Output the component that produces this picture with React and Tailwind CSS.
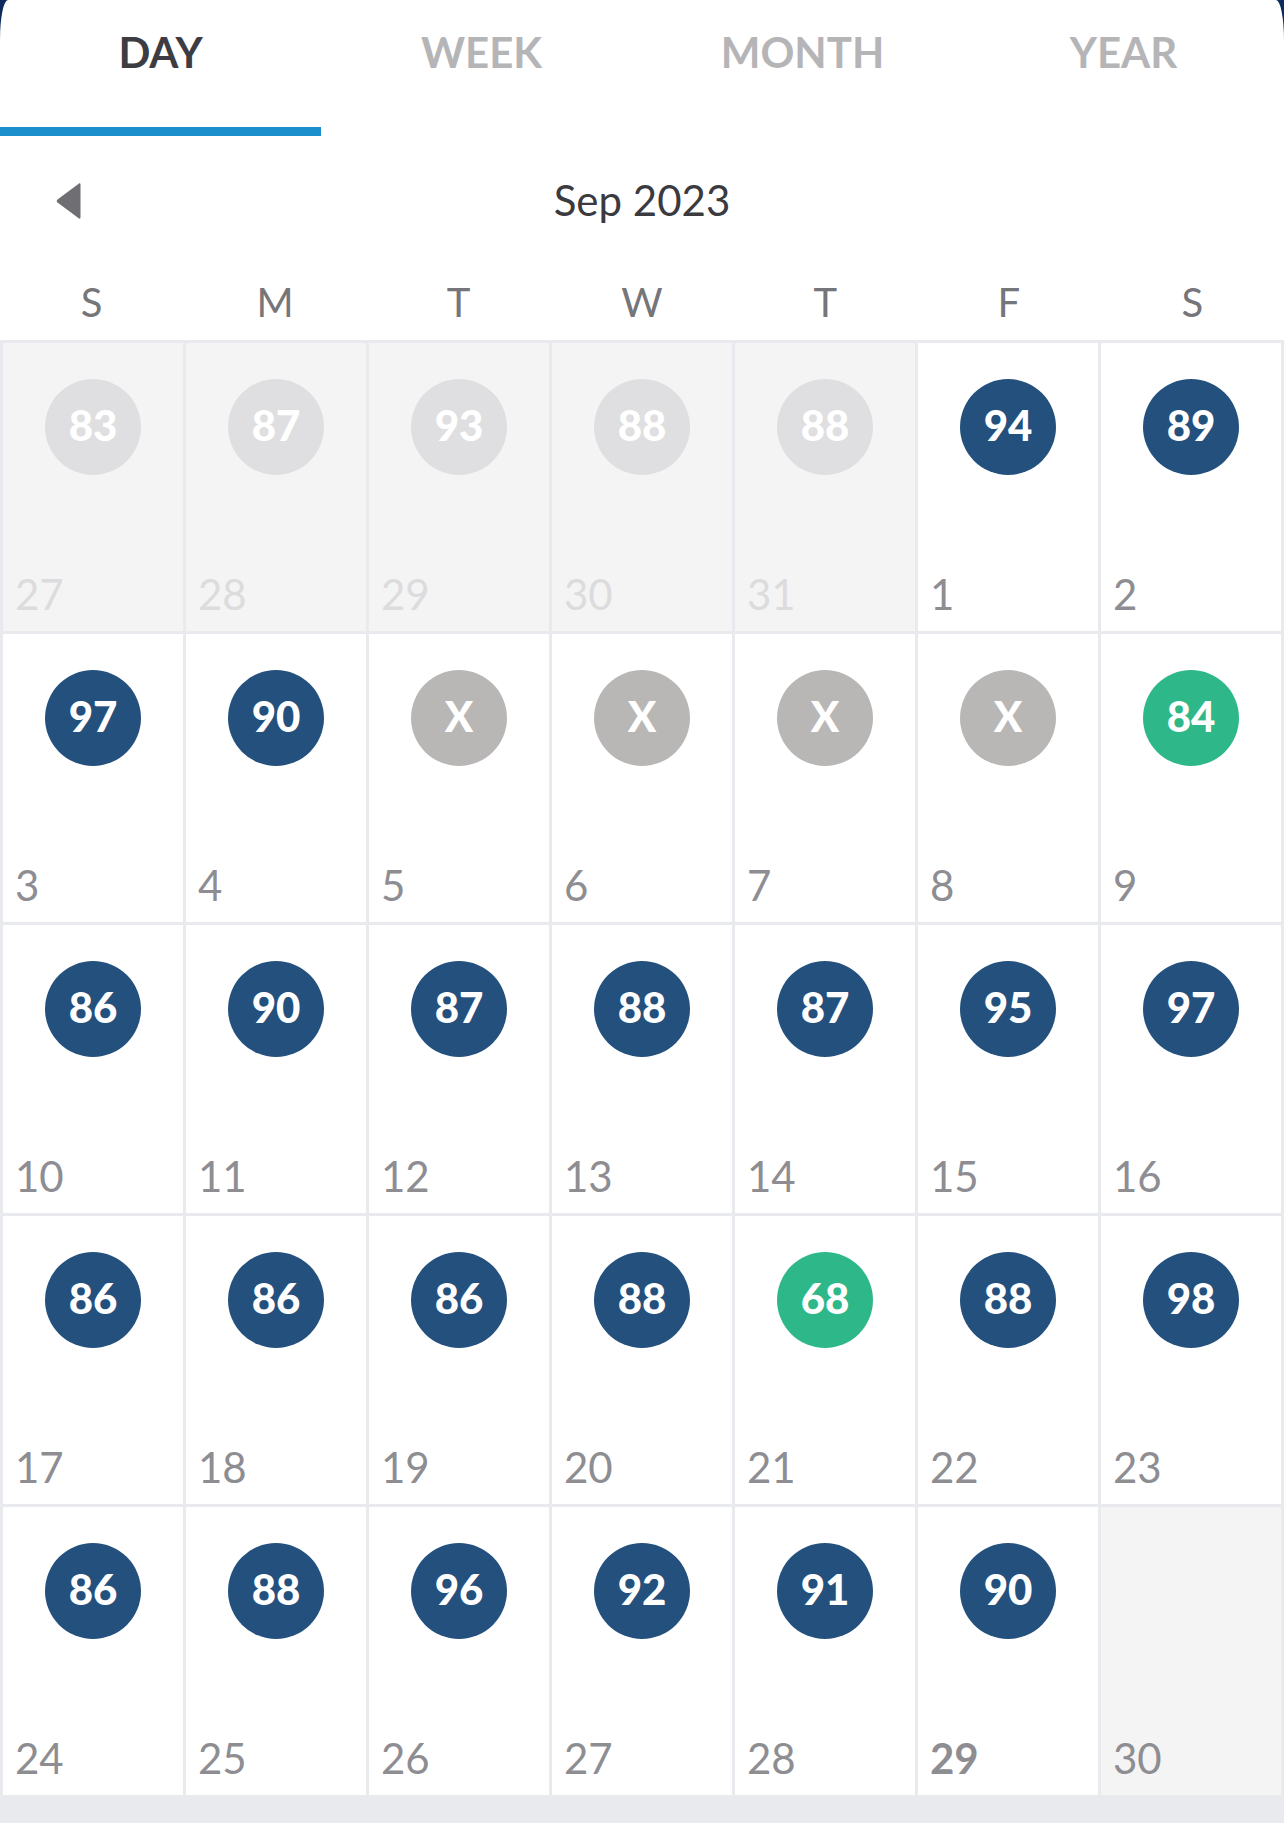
import React from 'react'

const tabs = ['DAY', 'WEEK', 'MONTH', 'YEAR']
const weekdays = ['S', 'M', 'T', 'W', 'T', 'F', 'S']

// kind: out = previous month, x = missed, good = green, none = no score
const days = [
    { d: 27, v: '83', kind: 'out' },
    { d: 28, v: '87', kind: 'out' },
    { d: 29, v: '93', kind: 'out' },
    { d: 30, v: '88', kind: 'out' },
    { d: 31, v: '88', kind: 'out' },
    { d: 1, v: '94' },
    { d: 2, v: '89' },
    { d: 3, v: '97' },
    { d: 4, v: '90' },
    { d: 5, v: 'X', kind: 'x' },
    { d: 6, v: 'X', kind: 'x' },
    { d: 7, v: 'X', kind: 'x' },
    { d: 8, v: 'X', kind: 'x' },
    { d: 9, v: '84', kind: 'good' },
    { d: 10, v: '86' },
    { d: 11, v: '90' },
    { d: 12, v: '87' },
    { d: 13, v: '88' },
    { d: 14, v: '87' },
    { d: 15, v: '95' },
    { d: 16, v: '97' },
    { d: 17, v: '86' },
    { d: 18, v: '86' },
    { d: 19, v: '86' },
    { d: 20, v: '88' },
    { d: 21, v: '68', kind: 'good' },
    { d: 22, v: '88' },
    { d: 23, v: '98' },
    { d: 24, v: '86' },
    { d: 25, v: '88' },
    { d: 26, v: '96' },
    { d: 27, v: '92' },
    { d: 28, v: '91' },
    { d: 29, v: '90', today: true },
    { d: 30, kind: 'none' },
]

const circleColor = {
    out: 'bg-[#dfdfe1]',
    x: 'bg-[#b9b6b6]',
    good: 'bg-[#2eb88a]',
}

const DayCell = ({ day }) => {
    const muted = day.kind === 'out' || day.kind === 'none'
    return (
        <div className={`h-[288px] flex flex-col ${muted ? 'bg-[#f4f4f4]' : 'bg-white'}`}>
            {day.v ? (
                <div className={`mt-[36px] self-center w-[96px] h-[96px] rounded-full flex items-center justify-center pb-[4px] text-white font-black text-[42px] leading-none ${circleColor[day.kind] || 'bg-[#23507d]'}`}>
                    {day.v}
                </div>
            ) : null}
            <p
                className={`mt-auto pl-[12px] pb-[16px] text-[42px] leading-none ${day.kind === 'out' ? 'text-[#dcdcde]' : 'text-[#8d8d92]'} ${day.today ? 'font-bold' : ''}`}
            >
                {day.d}
            </p>
        </div>
    )
}

const App = () => {
    return (
        <div className="w-[1284px] h-[1823px] bg-[#0c2a5b] overflow-hidden font-['Lato',sans-serif]">
            <div className="bg-white rounded-tl-[8px_40px] rounded-tr-[8px_40px]">
                <div className="grid grid-cols-4 h-[127px]">
                    {tabs.map((t, i) => (
                        <p
                            key={t}
                            className={`pt-[31px] text-center text-[42px] leading-none font-bold ${i === 0 ? 'text-[#3c3d42]' : 'text-[#b5b5b7]'}`}
                        >
                            {t}
                        </p>
                    ))}
                </div>
                <div className="h-[9px] w-1/4 bg-[#1a8fcb]" />

                <div className="grid grid-cols-[1fr_auto_1fr] items-start pt-[43px]">
                    <div className="pl-[56px] pt-[3px]">
                        <svg className="block" width="25" height="38" viewBox="0 0 25 38">
                            <path d="M23 1.5 C24 1 24.5 1.5 24.5 3 L24.5 35 C24.5 36.5 24 37 23 36.5 L1.5 20.5 C0.5 19.7 0.5 18.3 1.5 17.5 Z" fill="#6f6f73" />
                        </svg>
                    </div>
                    <p className="text-[42px] leading-none text-[#3a3a3f]">Sep 2023</p>
                    <div />
                </div>

                <div className="grid grid-cols-7 mt-[61px] pb-[18px]">
                    {weekdays.map((w, i) => (
                        <p key={i} className="text-center text-[40px] leading-none text-[#75757a]">
                            {w}
                        </p>
                    ))}
                </div>
            </div>

            <div className="bg-[#e9eaee] h-full">
                <div className="grid grid-cols-7 gap-[3px] p-[3px]">
                    {days.map((day, i) => (
                        <DayCell key={i} day={day} />
                    ))}
                </div>
            </div>
        </div>
    )
}

export default App
